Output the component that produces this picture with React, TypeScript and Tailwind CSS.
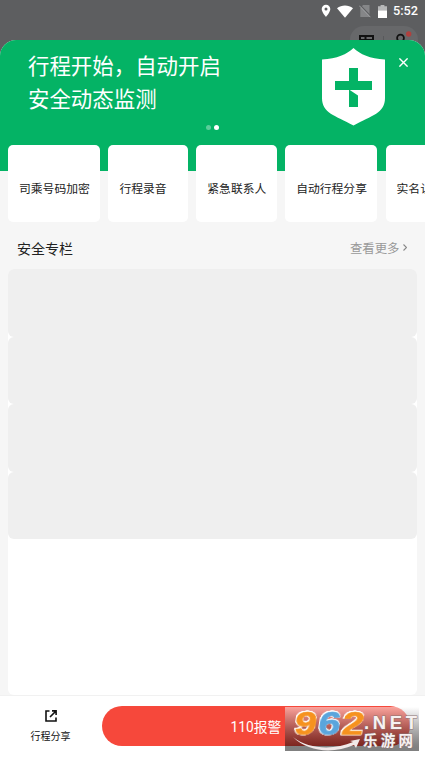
import { clsx } from 'clsx'

const FONT = "font-[Roboto,'Noto_Sans_CJK_SC',sans-serif]"

const features = [
  { label: '司乘号码加密', width: 'w-[92px]' },
  { label: '行程录音', width: 'w-[79.5px]' },
  { label: '紧急联系人', width: 'w-[80.5px]' },
  { label: '自动行程分享', width: 'w-[92px]' },
  { label: '实名认证', width: 'w-[80px]' },
]

function StatusBar() {
  return (
    <div className="flex h-[22px] items-center justify-end pr-[7px] text-white">
      <svg width="10" height="14" viewBox="0 0 10 14" className="mr-[6px]">
        <path d="M5 .8A4.3 4.3 0 0 0 .7 5.1C.7 8.3 5 13 5 13s4.3-4.7 4.3-7.9A4.3 4.3 0 0 0 5 .8Zm0 5.8a1.5 1.5 0 1 1 0-3 1.5 1.5 0 0 1 0 3Z" fill="currentColor" />
      </svg>
      <svg width="16" height="13" viewBox="0 0 16 13" className="mr-[6px]">
        <path d="M0 3.2C4.6-.3 11.4-.3 16 3.2L8 12.8Z" fill="currentColor" />
      </svg>
      <svg width="12" height="14" viewBox="0 0 12 14" className="mr-[7px]">
        <path d="M4 1h6.5v12H1.3V4.2Z" fill="#858688" />
        <path d="M.9 .9 12 12.4" stroke="#5d5e60" strokeWidth="1.2" />
        <path d="M.2 1.6 11.4 13.2" stroke="#a0a1a3" strokeWidth="1" />
      </svg>
      <svg width="9" height="13" viewBox="0 0 9 13" className="mr-[6px]">
        <path d="M0 1.2h2.6V0h3.8v1.2H9V6H0Z" fill="#b6b7b8" />
        <path d="M0 5.6h9V13H0Z" fill="currentColor" />
      </svg>
      <span className="text-[12.7px] leading-[22px] font-medium">5:52</span>
    </div>
  )
}

function MenuCapsule() {
  return (
    <div className="absolute top-[26px] left-[350px] flex h-[28px] w-[68px] items-center rounded-full bg-[#67686a]">
      <svg width="68" height="28" viewBox="0 0 68 28" fill="none">
        <path d="M10 10h13v11H10ZM10 14h4M15.5 10v8M14 14h8" stroke="#111" strokeWidth="2" />
        <path d="M33.5 10v9" stroke="#58595b" />
        <circle cx="50.5" cy="12" r="3.4" stroke="#111" strokeWidth="1.8" />
        <circle cx="58.7" cy="8" r="2.7" fill="#b0403e" />
      </svg>
    </div>
  )
}

function Shield() {
  return (
    <svg width="64" height="78" viewBox="0 0 64 78">
      <path d="M31.5 0C38 6 48 11 63 11.5V50C63 65 50 67.5 31.5 77.5C13 67.5 0 65 0 50V11.5C15 11 25 6 31.5 0Z" fill="#fff" />
      <path d="M27 20h9v13h14v9H13v-9h14Z" fill="#04b365" />
      <path d="M27 41.5 36 47.5V59h-9Z" fill="#04b365" />
    </svg>
  )
}

function Banner() {
  return (
    <div className="relative h-[131px] bg-[#04b365] text-white">
      <div className="flex pl-[28px]">
        <p className="w-[294px] pt-[9.5px] text-[21.45px] leading-[33px] whitespace-nowrap">
          行程开始，自动开启
          <br />
          安全动态监测
        </p>
        <div className="pt-[8px]">
          <Shield />
        </div>
        <button className="ml-[13px] h-[10px] pt-[18px]" aria-label="关闭">
          <svg width="9" height="9" viewBox="0 0 9 9" fill="none" stroke="#fff" strokeWidth="1.4">
            <path d="m.4.4 8.2 8.2M8.6.4.4 8.6" />
          </svg>
        </button>
      </div>
      <div className="absolute top-[84.5px] left-[206px] flex gap-[3px]">
        <span className="size-[5px] rounded-full bg-white/35" />
        <span className="size-[5px] rounded-full bg-white" />
      </div>
    </div>
  )
}

function Watermark() {
  return (
    <div className="absolute top-[707px] left-[285px] h-[44px] w-[134px] bg-linear-to-b from-white/50 to-black/50">
      <svg width="134" height="44" viewBox="0 0 134 44">
        <path d="M8 30C24 43 50 43 68 35L65 34 75 32 71 41 69 38C48 47 23 45 8 30Z" fill="#f1e9e8" />
        <g
          className="[filter:drop-shadow(.8px_0_0_#fff)_drop-shadow(-.8px_0_0_#fff)_drop-shadow(0_.8px_0_#fff)_drop-shadow(0_-.8px_0_#fff)]"
          transform="translate(4.5 0) skewX(-9)"
          fontFamily="'Liberation Sans', sans-serif"
          fontWeight="bold"
          fontSize="32"
          strokeWidth=".7"
          strokeLinejoin="round"
        >
          <text x="8" y="27.3" textLength="22" lengthAdjust="spacingAndGlyphs" fill="#f6921e" stroke="#f6921e">9</text>
          <text x="32" y="27.3" textLength="22" lengthAdjust="spacingAndGlyphs" fill="#5aa5dc" stroke="#5aa5dc">6</text>
          <text x="55.5" y="27.3" textLength="22" lengthAdjust="spacingAndGlyphs" fill="#f6921e" stroke="#f6921e">2</text>
        </g>
        <g fill="#f7f1f1" stroke="#8d7473" strokeWidth="1" paintOrder="stroke" fontWeight="bold">
          <text x="79" y="22" fontFamily="'Liberation Sans', sans-serif" fontSize="18.5" textLength="53" lengthAdjust="spacing">.NET</text>
          <text x="78" y="39" fontFamily="'Noto Sans CJK SC', sans-serif" fontSize="14.5" textLength="50" lengthAdjust="spacing">乐游网</text>
        </g>
      </svg>
    </div>
  )
}

export default function App() {
  return (
    <div className={clsx('relative flex h-[757px] w-[425px] flex-col overflow-hidden bg-[#5d5e60]', FONT)}>
      <StatusBar />
      <MenuCapsule />

      <div className="relative mt-[18px] flex flex-1 flex-col overflow-hidden rounded-t-[16px] bg-[#f6f6f6]">
        <Banner />

        {/* 安全功能卡片，横向滚动 */}
        <div className="relative -mt-[26px] flex gap-[8.4px] pl-[8px]">
          {features.map((item) => (
            <div
              key={item.label}
              className={clsx(
                'flex h-[77px] shrink-0 items-center rounded-[5px] bg-white pt-[12px] pl-[11px] text-[11.8px] whitespace-nowrap text-[#222]',
                item.width
              )}
            >
              {item.label}
            </div>
          ))}
        </div>

        <div className="flex h-[47px] items-center justify-between pt-[7px] pr-[18.5px] pl-[17px]">
          <h2 className="text-[14px] text-[#222]">安全专栏</h2>
          <a className="flex items-center gap-[3px] text-[12.4px] text-[#999]">
            查看更多
            <svg width="4" height="7" viewBox="0 0 4 7" fill="none" stroke="#888" strokeWidth="1.1" className="-mt-[2px]">
              <path d="m.5.5 3 3-3 3" />
            </svg>
          </a>
        </div>

        {/* 列表占位 */}
        <div className="mx-[8px] flex-1 rounded-[6px] bg-white">
          {[0, 1, 2, 3].map((i) => (
            <div key={i} className="h-[67.5px] rounded-[6px] bg-[#efefef]" />
          ))}
        </div>

        <div className="flex h-[62px] shrink-0 border-t border-[#f1f1f1] bg-white">
          <button className="flex w-[102px] flex-col items-center pt-[14px] pr-px text-[10px] text-[#111]">
            <svg width="12" height="12" viewBox="0 0 12 12" fill="none" stroke="#111" strokeWidth="1.6" className="mb-[7px]">
              <path d="M4.5 1H1v10h10V7.5M7 .9h4.1V5M11 1 5 7" />
            </svg>
            <span className="leading-[15px]">行程分享</span>
          </button>
          <button className="mt-[10px] h-[40px] w-[308px] rounded-full bg-[#f6483b] pt-[2px] text-[13.8px] text-white">
            110报警
          </button>
        </div>
      </div>

      <Watermark />
    </div>
  )
}
